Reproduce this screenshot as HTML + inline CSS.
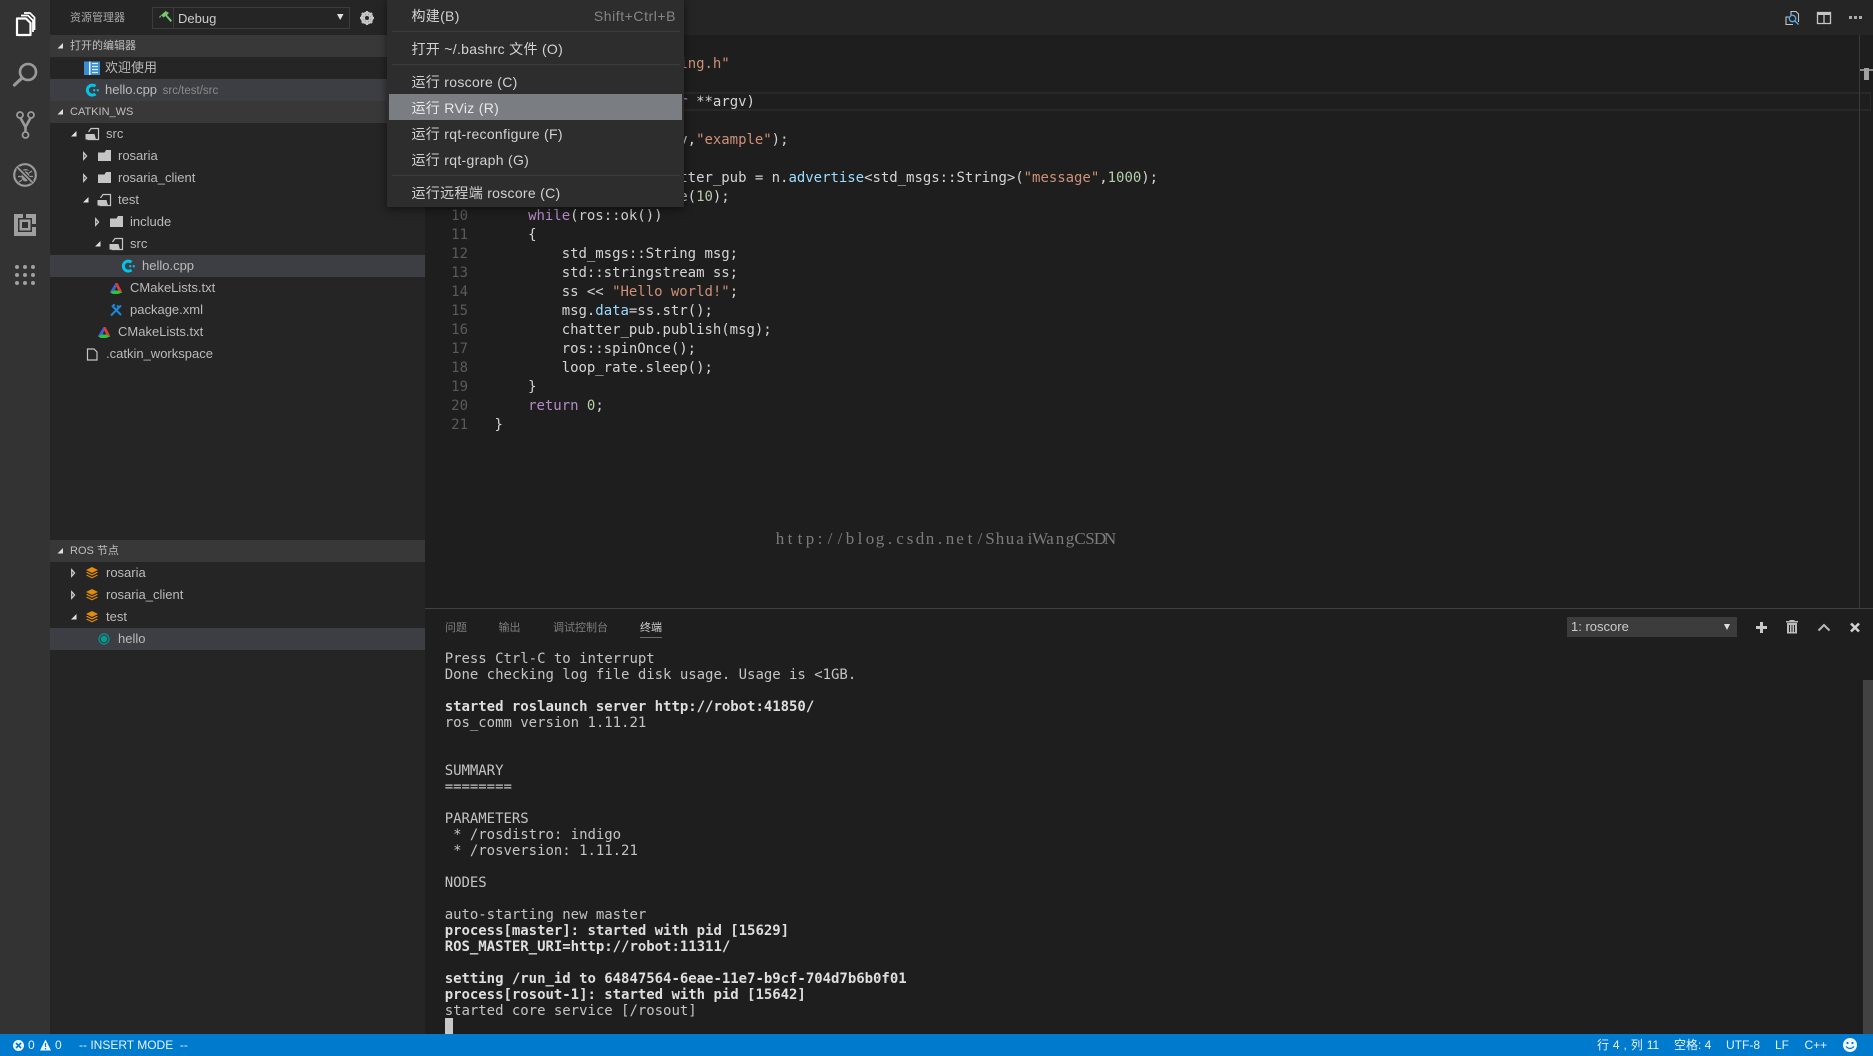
<!DOCTYPE html>
<html lang="zh">
<head>
<meta charset="utf-8">
<title>VS Code ROS</title>
<style>
*{margin:0;padding:0;box-sizing:border-box}
html,body{width:1873px;height:1056px;overflow:hidden;background:#1e1e1e;font-family:"Liberation Sans","Noto Sans CJK SC",sans-serif;color:#ccc}
#root{position:absolute;left:0;top:0;width:1873px;height:1056px;overflow:hidden;background:#1e1e1e}
.a{position:absolute;white-space:pre}
#activity{left:0;top:0;width:50px;height:1034px;background:#333}
#side{left:50px;top:0;width:375px;height:1034px;background:#252526}
#tabs{left:425px;top:0;width:1448px;height:35px;background:#252526}
.sec{left:50px;width:375px;height:22px;background:#383838}
.st{font-size:11px;line-height:23px;color:#bfbfbf;left:70px}
.sel{left:50px;width:375px;height:22px;background:#3d3e43}
.r{font-size:13px;line-height:22px;color:#bbb}
.ln{left:425px;width:43px;text-align:right;font:14px/19px "DejaVu Sans Mono",monospace;color:#5a5a5a}
.c{left:494.5px;font:14px/19px "DejaVu Sans Mono",monospace;color:#d4d4d4;letter-spacing:-.03px}
.k{color:#b88ac8}.s{color:#ce9178}.n{color:#b5cea8}.b{color:#9cdcfe}
.t{left:444.7px;font:14px/16px "DejaVu Sans Mono",monospace;color:#c4c4c4;letter-spacing:-.03px}
.t b{color:#dedede;font-weight:bold}
.tab{font-size:11px;line-height:16px;top:620px;color:#7f7f7f}
#menu{left:387px;top:0;width:297px;height:207px;background:#2d2d2e;box-shadow:0 2px 8px rgba(0,0,0,.55);z-index:5}
.m{left:24.5px;font-size:14px;line-height:22px;color:#d2d2d2;letter-spacing:.3px}
.sep{left:5px;width:288px;height:1px;background:#3b3b3b}
#status{left:0;top:1034px;width:1873px;height:22px;background:#007acc;z-index:3}
.u{font-size:12px;line-height:22px;color:#e6f2fa;top:0}
svg{position:absolute;left:0;top:0;overflow:hidden}
</style>
</head>
<body>
<div id="root">
<div class="a" id="activity"></div>
<div class="a" id="side"></div>
<div class="a" id="tabs"></div>

<!-- editor decorations -->
<div class="a" style="left:425px;top:92px;width:1446px;height:19px;border-top:2px solid #282828;border-bottom:2px solid #282828;border-right:1px solid #282828"></div>
<div class="a" style="left:1859px;top:35px;width:1px;height:573px;background:#3a3a3a"></div>
<div class="a" style="left:1860px;top:69px;width:13px;height:2px;background:#8a8a8a"></div>
<div class="a" style="left:1864px;top:68px;width:5px;height:12px;background:#a0a0a0"></div>

<!-- sidebar -->
<div class="a" style="left:70px;top:7px;font-size:11px;line-height:22px;color:#a8a8a8">资源管理器</div>
<div class="a" style="left:152px;top:7px;width:198px;height:22px;border:1px solid #3c3c3c"></div>
<div class="a" style="left:173px;top:7px;width:1px;height:22px;background:#3c3c3c"></div>
<div class="a" style="left:178px;top:8px;font-size:13px;line-height:22px;color:#ccc">Debug</div>

<div class="a sec" style="top:35px"></div><div class="a st" style="top:35px">打开的编辑器</div>
<div class="a r" style="left:105px;top:57px">欢迎使用</div>
<div class="a sel" style="top:79px"></div>
<div class="a r" style="left:105px;top:79px">hello.cpp <span style="font-size:11.5px;color:#8a8a8a;padding-left:2px">src/test/src</span></div>
<div class="a sec" style="top:101px"></div><div class="a st" style="top:101px">CATKIN_WS</div>
<div class="a r" style="left:106px;top:123px">src</div>
<div class="a r" style="left:118px;top:145px">rosaria</div>
<div class="a r" style="left:118px;top:167px">rosaria_client</div>
<div class="a r" style="left:118px;top:189px">test</div>
<div class="a r" style="left:130px;top:211px">include</div>
<div class="a r" style="left:130px;top:233px">src</div>
<div class="a sel" style="top:255px"></div>
<div class="a r" style="left:142px;top:255px">hello.cpp</div>
<div class="a r" style="left:130px;top:277px">CMakeLists.txt</div>
<div class="a r" style="left:130px;top:299px">package.xml</div>
<div class="a r" style="left:118px;top:321px">CMakeLists.txt</div>
<div class="a r" style="left:106px;top:343px">.catkin_workspace</div>

<div class="a sec" style="top:540px"></div><div class="a st" style="top:540px">ROS 节点</div>
<div class="a r" style="left:106px;top:562px">rosaria</div>
<div class="a r" style="left:106px;top:584px">rosaria_client</div>
<div class="a r" style="left:106px;top:606px">test</div>
<div class="a sel" style="top:628px"></div>
<div class="a r" style="left:118px;top:628px">hello</div>

<!-- code -->
<div class="a ln" style="top:35.5px">1</div><div class="a c" style="top:35.5px"><span class="k">#include</span> <span class="s">"ros/ros.h"</span></div>
<div class="a ln" style="top:54.5px">2</div><div class="a c" style="top:54.5px"><span class="k">#include</span> <span class="s">"std_msgs/String.h"</span></div>
<div class="a c" style="top:92.5px"><span class="k">int</span> main(<span class="k">int</span> argc, <span class="k">char</span> **argv)</div>
<div class="a c" style="top:130.5px">    ros::init(argc,argv,<span class="s">"example"</span>);</div>
<div class="a c" style="top:168.5px">    ros::Publisher chatter_pub = n.<span class="b">advertise</span>&lt;std_msgs::String&gt;(<span class="s">"message"</span>,<span class="n">1000</span>);</div>
<div class="a c" style="top:187.5px">    ros::Rate loop_rate(<span class="n">10</span>);</div>
<div class="a ln" style="top:206.5px">10</div><div class="a c" style="top:206.5px">    <span class="k">while</span>(ros::ok())</div>
<div class="a ln" style="top:226px">11</div><div class="a c" style="top:226px">    {</div>
<div class="a ln" style="top:245px">12</div><div class="a c" style="top:245px">        std_msgs::String msg;</div>
<div class="a ln" style="top:264px">13</div><div class="a c" style="top:264px">        std::stringstream ss;</div>
<div class="a ln" style="top:283px">14</div><div class="a c" style="top:283px">        ss &lt;&lt; <span class="s">"Hello world!"</span>;</div>
<div class="a ln" style="top:302px">15</div><div class="a c" style="top:302px">        msg.<span class="b">data</span>=ss.str();</div>
<div class="a ln" style="top:321px">16</div><div class="a c" style="top:321px">        chatter_pub.publish(msg);</div>
<div class="a ln" style="top:340px">17</div><div class="a c" style="top:340px">        ros::spinOnce();</div>
<div class="a ln" style="top:359px">18</div><div class="a c" style="top:359px">        loop_rate.sleep();</div>
<div class="a ln" style="top:378px">19</div><div class="a c" style="top:378px">    }</div>
<div class="a ln" style="top:397px">20</div><div class="a c" style="top:397px">    <span class="k">return</span> <span class="n">0</span>;</div>
<div class="a ln" style="top:416px">21</div><div class="a c" style="top:416px">}</div>

<!-- panel -->
<div class="a" style="left:425px;top:608px;width:1448px;height:1px;background:#414141"></div>
<div class="a tab" style="left:445px">问题</div>
<div class="a tab" style="left:498.5px">输出</div>
<div class="a tab" style="left:553px">调试控制台</div>
<div class="a tab" style="left:640px;color:#d0d0d0">终端</div>
<div class="a" style="left:640px;top:637px;width:22px;height:1px;background:#6a6a6a"></div>
<div class="a" style="left:1567px;top:617px;width:170px;height:20px;background:#3c3c3c;font-size:13px;line-height:20px;color:#ccc;padding-left:4px">1: roscore</div>
<div class="a" style="left:1863px;top:680px;width:10px;height:354px;background:#424242"></div>

<div class="a t" style="top:651px">Press Ctrl-C to interrupt
Done checking log file disk usage. Usage is &lt;1GB.

<b>started roslaunch server http://robot:41850/</b>
ros_comm version 1.11.21


SUMMARY
========

PARAMETERS
 * /rosdistro: indigo
 * /rosversion: 1.11.21

NODES

auto-starting new master
<b>process[master]: started with pid [15629]</b>
<b>ROS_MASTER_URI=http://robot:11311/</b>

<b>setting /run_id to 64847564-6eae-11e7-b9cf-704d7b6b0f01</b>
<b>process[rosout-1]: started with pid [15642]</b>
started core service [/rosout]</div>
<div class="a" style="left:445px;top:1018px;width:8px;height:16px;background:#c8c8c8"></div>

<!-- icons overlay -->
<svg width="1873" height="1056" viewBox="0 0 1873 1056">
<defs>
<symbol id="to" overflow="visible"><path d="M5.5 0V5.5H0Z" fill="#e0e0e0"/></symbol>
<symbol id="tc" overflow="visible"><path d="M.7.7 3.600 4 .7 7.3Z" fill="#3a3a3a" stroke="#d0d0d0" stroke-width="1.2"/></symbol>
<symbol id="fc" overflow="visible"><path d="M0 2.5H6.5L8 0H13V11H0Z" fill="#c5c5c5"/></symbol>
<symbol id="fo" overflow="visible"><path d="M3.5 4 6 .5H13.5V11.5H2.5" fill="none" stroke="#c5c5c5" stroke-width="1.2"/><path d="M.5 6H9.5L11 11.5H.5Z" fill="#c5c5c5"/></symbol>
<symbol id="cpp" overflow="visible"><path d="M9.5 2.2A5 5 0 1 0 9.5 10" fill="none" stroke="#00c4e8" stroke-width="3"/><path d="M7 5.2H9.4M8.2 4V6.4M10.6 5.2H13M11.8 4V6.4" stroke="#00c4e8" stroke-width="1.2" transform="translate(0 1)"/></symbol>
<symbol id="cm" overflow="visible"><path d="M5.500 0 0 9 4 9 6.300 3.500Z" fill="#3b63d8"/><path d="M5.500 0 7.500 0 12.300 9 8.500 8 6 3Z" fill="#e03a3a"/><path d="M0 9.500 4 7.500 8.500 7.500 12.300 9.500 8 11H3Z" fill="#2ec43c"/></symbol>
<symbol id="st" overflow="visible"><path d="M6 0 12 3 6 6 0 3Z" fill="#e38c0c"/><path d="M1.2 4.9 6 7.3 10.8 4.9 12 5.6 6 8.6 0 5.6Z" fill="#e38c0c"/><path d="M1.2 7.7 6 10.1 10.8 7.7 12 8.4 6 11.4 0 8.4Z" fill="#e38c0c"/></symbol>
</defs>

<!-- activity bar -->
<g fill="none" stroke="#fff">
<path d="M17 18.500H26L30.500 23V35H17Z" stroke-width="2.200" stroke-linejoin="round"/>
<path d="M21 15.500H28L33 20.500V32" stroke-width="1.800"/>
<path d="M24 13H30L34.500 17.500V30" stroke-width="1.800"/>
</g>
<g fill="none" stroke="#9a9a9a">
<circle cx="28" cy="72" r="8" stroke-width="2.6"/>
<path d="M22 78 14.500 85" stroke-width="3.200" stroke-linecap="round"/>
<g stroke-width="1.800"><circle cx="20" cy="115" r="3"/><circle cx="31" cy="115" r="3"/><circle cx="25.500" cy="135" r="3"/></g>
<path d="M20.500 118 25.500 127 30.500 118M25.500 127V132" stroke-width="2.600"/>
<circle cx="25" cy="175" r="10.800" stroke-width="2.200"/>
<ellipse cx="25.500" cy="176.500" rx="4" ry="5" fill="#9a9a9a" stroke="none"/>
<path d="M22 170.500Q25.500 167.500 29 170.500Z" fill="#9a9a9a" stroke="none"/>
<path d="M19 171 22 173M32 171 29 173M18 176.500H21.500M33 176.500H29.500M19 182 22 180M32 182 29 180" stroke-width="1.300"/>
<path d="M17.500 167.500 32.500 182.500" stroke="#333" stroke-width="4"/>
<path d="M17 167 33 183" stroke-width="1.800"/>
</g>
<g fill="#9f9f9f">
<path d="M14 214H23V218H18V232H32V227H36V236H14Z"/>
<path d="M26 214H36V224H32V218H26Z"/>
<path d="M19.500 219.500H30.500V230.500H19.500ZM22 222V228H28V222Z" fill-rule="evenodd"/>
<circle cx="17" cy="267" r="2"/><circle cx="25" cy="267" r="2"/><circle cx="33" cy="267" r="2"/>
<circle cx="17" cy="275" r="2"/><circle cx="25" cy="275" r="2"/><circle cx="33" cy="275" r="2"/>
<circle cx="17" cy="283" r="2"/><circle cx="25" cy="283" r="2"/><circle cx="33" cy="283" r="2"/>
</g>

<!-- sidebar header -->
<path d="M159 17 164 12.500 165.500 11 169 13 167 15 172 20.500 170.500 22 165.500 16 163.500 17.500 161.500 15.500 160 18Z" fill="#76c66f"/>
<path d="M337 14H343.500L340.200 20Z" fill="#e0e0e0"/>
<g transform="translate(367 18)"><circle r="5" fill="none" stroke="#c5c5c5" stroke-width="2.600"/><path d="M0-7V7M-7 0H7M-5-5 5 5M-5 5 5-5" stroke="#c5c5c5" stroke-width="2.200"/><circle r="2" fill="#252526"/></g>

<!-- twisties -->
<use href="#to" x="57.500" y="43"/>
<use href="#to" x="57.500" y="109"/>
<use href="#to" x="71" y="131"/>
<use href="#tc" x="83" y="152"/>
<use href="#tc" x="83" y="174"/>
<use href="#to" x="83" y="197"/>
<use href="#tc" x="95" y="218"/>
<use href="#to" x="95" y="241"/>
<use href="#to" x="57.500" y="548"/>
<use href="#tc" x="71" y="569"/>
<use href="#tc" x="71" y="591"/>
<use href="#to" x="71" y="614"/>

<!-- file icons -->
<path d="M84 61.500H100V75H84Z" fill="#3a8ed0"/>
<path d="M89 61.500H90.500V75H89Z" fill="#e8f2fa"/>
<path d="M92 63.500H98M92 66.500H98M92 69.500H98M92 72.500H98" stroke="#d8ecf8" stroke-width="1.200"/>
<use href="#cpp" x="86" y="84"/>
<use href="#fo" x="85" y="128"/>
<use href="#fc" x="98" y="150"/>
<use href="#fc" x="98" y="172"/>
<use href="#fo" x="97" y="194"/>
<use href="#fc" x="110" y="216"/>
<use href="#fo" x="109" y="238"/>
<use href="#cpp" x="122" y="260"/>
<use href="#cm" x="110" y="283"/>
<g transform="translate(110 304.500)" stroke="#1e88d8" fill="none" stroke-width="2"><path d="M1 11 9 3M7 1 9 3 11 1M3 1 5 0M2 1 11 10.500"/></g>
<use href="#cm" x="98" y="327"/>
<path d="M87.500 349H94L97 352V360H87.500Z" fill="none" stroke="#c5c5c5" stroke-width="1.200"/>
<use href="#st" x="86" y="567"/>
<use href="#st" x="86" y="589"/>
<use href="#st" x="86" y="611"/>
<circle cx="104" cy="639" r="5" fill="none" stroke="#0a8a82" stroke-width="1.400"/><circle cx="104" cy="639" r="3.200" fill="#0a9a90"/>

<!-- editor title icons -->
<path d="M1789 17H1786V24.500H1793M1791 15V11.500H1796L1798.500 14V22" fill="none" stroke="#c5c5c5" stroke-width="1.100"/>
<circle cx="1792.500" cy="18.500" r="3.200" fill="none" stroke="#55a8e8" stroke-width="1.300"/><path d="M1795 21 1798.500 24.500" stroke="#55a8e8" stroke-width="1.500"/>
<path d="M1817.500 12.500H1830.500V23.500H1817.500ZM1824 14V23.500" fill="none" stroke="#c5c5c5" stroke-width="1.300"/><path d="M1817 12H1831V15H1817Z" fill="#c5c5c5"/>
<g fill="#aaa"><rect x="1849" y="16" width="3" height="3"/><rect x="1854" y="16" width="3" height="3"/><rect x="1859" y="16" width="3" height="3"/></g>

<!-- panel icons -->
<path d="M1724 624H1730L1727 630Z" fill="#e0e0e0"/>
<path d="M1756 627.500H1767M1761.500 622V633" stroke="#c8c8c8" stroke-width="3"/>
<path d="M1787 623H1797V633.500H1787ZM1786 621H1798V622.500H1786ZM1789.500 620H1794.500V621H1789.500Z" fill="#bbb"/>
<path d="M1789.500 625V632M1792 625V632M1794.500 625V632" stroke="#2a2a2a" stroke-width="1"/>
<path d="M1818.500 630.500 1824 625 1829.500 630.500" fill="none" stroke="#bbb" stroke-width="2"/>
<path d="M1851 623.500 1859 631.500M1859 623.500 1851 631.500" stroke="#d0d0d0" stroke-width="2.600"/>

<!-- watermark -->
<text y="544" text-anchor="middle" x="780 790 800 810 820 830 840 850 860 870 880 890 900 910 920 930 940 950 960 970 980 990 1000 1010 1020 1030 1040 1050 1060 1070 1080 1090 1100 1110" font-family="Liberation Serif, serif" font-size="17" fill="#7c7c7c">http://blog.csdn.net/ShuaiWangCSDN</text>
</svg>

<!-- context menu -->
<div class="a" id="menu">
  <div class="a m" style="top:5px">构建(B)</div>
  <div class="a m" style="top:5px;left:auto;right:8px;color:#858585;letter-spacing:.55px">Shift+Ctrl+B</div>
  <div class="a sep" style="top:31px"></div>
  <div class="a m" style="top:38px">打开 ~/.bashrc 文件 (O)</div>
  <div class="a sep" style="top:64px"></div>
  <div class="a m" style="top:71px">运行 roscore (C)</div>
  <div class="a" style="left:2px;top:94px;width:293px;height:26px;background:#7a7d81"></div>
  <div class="a m" style="top:97px;color:#e8e8e8">运行 RViz (R)</div>
  <div class="a m" style="top:123px">运行 rqt-reconfigure (F)</div>
  <div class="a m" style="top:149px">运行 rqt-graph (G)</div>
  <div class="a sep" style="top:175px"></div>
  <div class="a m" style="top:182px">运行远程端 roscore (C)</div>
</div>

<!-- status bar -->
<div class="a" id="status">
  <div class="a u" style="left:28px">0</div>
  <div class="a u" style="left:55px">0</div>
  <div class="a u" style="left:79px">-- INSERT MODE  --</div>
  <div class="a u" style="left:1597px;word-spacing:.6px">行 4 , 列 11</div>
  <div class="a u" style="left:1674px">空格: 4</div>
  <div class="a u" style="left:1726px">UTF-8</div>
  <div class="a u" style="left:1775px">LF</div>
  <div class="a u" style="left:1804.500px">C++</div>
  <svg width="1873" height="22" viewBox="0 0 1873 22">
    <circle cx="18.500" cy="11.500" r="5.500" fill="#eef6fc"/><path d="M16 9 21 14M21 9 16 14" stroke="#007acc" stroke-width="1.600"/>
    <path d="M45.500 5.500 51 16.500H40Z" fill="#eef6fc"/><path d="M45.500 9V13M45.500 14V15.500" stroke="#007acc" stroke-width="1.200"/>
    <circle cx="1850" cy="11" r="7" fill="#f2f8fc"/><circle cx="1847.500" cy="9" r="1.100" fill="#007acc"/><circle cx="1852.500" cy="9" r="1.100" fill="#007acc"/><path d="M1846 12.500Q1850 16.500 1854 12.500" fill="none" stroke="#007acc" stroke-width="1.200"/>
  </svg>
</div>
</div>
</body>
</html>
